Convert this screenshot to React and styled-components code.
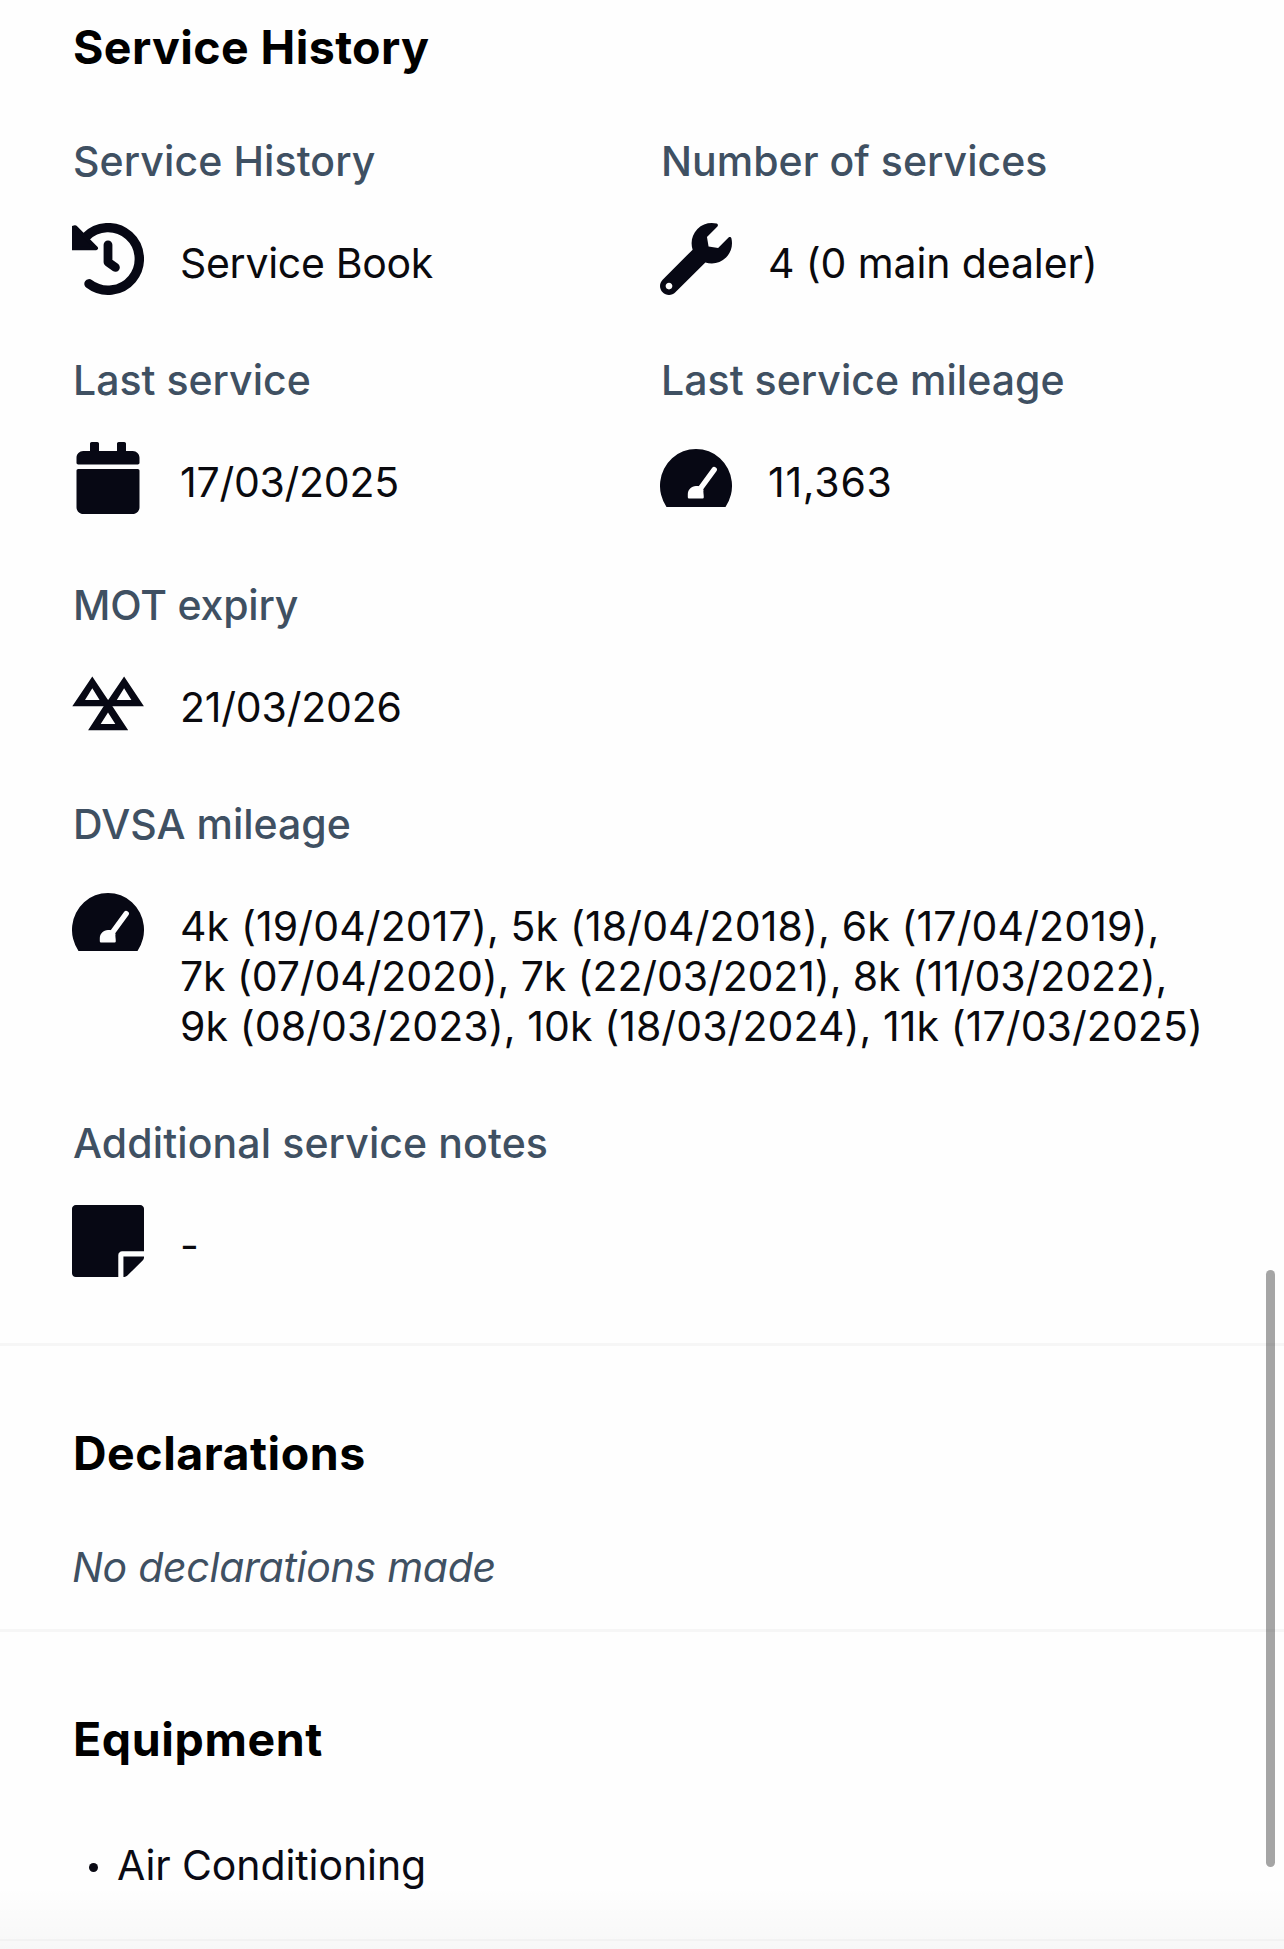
import React from 'react';
import styled, { createGlobalStyle } from 'styled-components';
import { FaWrench, FaCalendar } from 'react-icons/fa';

const GlobalStyle = createGlobalStyle`
    * {
        box-sizing: border-box;
    }

    body {
        margin: 0;
        background: #fefefe;
        font-family: Inter, 'Liberation Sans', sans-serif;
        overflow: hidden;
    }

    h2, p, ul, dl, dt, dd {
        margin: 0;
        padding: 0;
    }
`;

const PageStyles = styled.main`
    position: relative;
    height: 1949px;
    overflow: hidden;
    background: #fefefe;
`;

const Section = styled.section`
    height: ${({ $height }) => $height}px;
    padding: ${({ $top }) => $top}px 72px 0;
    border-bottom: ${({ $last }) => $last ? 'none' : '3px solid #f6f6f6'};
`;

const SectionTitle = styled.h2`
    height: 56px;
    padding-left: 1px;
    line-height: 56px;
    font-size: 46.5px;
    font-weight: 700;
    letter-spacing: ${({ $tracking }) => $tracking || 0}px;
    color: #000;
    white-space: nowrap;
`;

const DetailGrid = styled.dl`
    display: grid;
    grid-template-columns: 588px 1fr;
    grid-template-rows: 219px 225px 219px 319px 152px;
    margin-top: 61px;
`;

const Detail = styled.div`
    grid-column: ${({ $wide }) => $wide ? '1 / -1' : 'auto'};
`;

const DetailLabel = styled.dt`
    height: 50px;
    padding-left: 1px;
    line-height: 50px;
    font-size: 41px;
    font-weight: 500;
    letter-spacing: ${({ $tracking }) => $tracking || 0}px;
    color: #3f5062;
    white-space: nowrap;
`;

const DetailRow = styled.dd`
    display: flex;
    align-items: flex-start;
    gap: 36px;
    margin-top: 37px;
`;

const IconBox = styled.span`
    display: flex;
    flex: none;
    justify-content: center;
    width: 72px;
    height: 72px;
    font-size: 72px;
    color: #070814;
`;

const DetailValue = styled.span`
    padding-top: 15px;
    line-height: 50px;
    font-size: 41px;
    color: #0a0a0e;
    white-space: nowrap;
`;

const ValueLine = styled.span`
    display: block;
    letter-spacing: ${({ $tracking }) => $tracking || 0}px;
`;

const EmptyNote = styled.p`
    margin-top: 61px;
    line-height: 50px;
    font-size: 41px;
    font-style: italic;
    letter-spacing: -0.28px;
    color: #3f5062;
`;

const EquipmentList = styled.ul`
    margin-top: 73px;
    list-style: none;
`;

const EquipmentItem = styled.li`
    display: flex;
    align-items: center;
    gap: 19px;
    padding-left: 17px;
    line-height: 50px;
    font-size: 41px;
    letter-spacing: -0.1px;
    color: #0a0a14;

    &::before {
        content: '';
        width: 9px;
        height: 9px;
        margin-top: 4px;
        border-radius: 50%;
        background: #0a0a14;
    }
`;

const ScrollThumb = styled.div`
    position: absolute;
    top: 1270px;
    right: 9px;
    width: 9px;
    height: 597px;
    border-radius: 5px;
    background: rgba(0, 0, 0, 0.35);
`;

const BottomShade = styled.div`
    position: absolute;
    right: 0;
    bottom: 0;
    left: 0;
    height: 62px;
    background: linear-gradient(rgba(0, 0, 0, 0), rgba(0, 0, 0, 0.028));

    &::after {
        content: '';
        position: absolute;
        right: 0;
        bottom: 8px;
        left: 0;
        height: 2px;
        background: rgba(0, 0, 0, 0.025);
    }
`;


const HistoryIcon = () => (
    <svg width='72' height='72' viewBox='0 0 72 72' fill='none' stroke='currentColor' strokeLinecap='round' strokeLinejoin='round'>
        <path strokeWidth='9.4' d='M13.5 14.2A31.3 31.3 0 1 1 17 60.8' />
        <path strokeWidth='8.8' d='M36 21.8V39.2L43.4 44.4' />
        <path fill='currentColor' strokeWidth='4' d='M0 5L3.2 4.2L24 25.2H0Z' />
    </svg>
)

const GaugeIcon = () => (
    <svg width='72' height='72' viewBox='0 0 72 72'>
        <path fill='currentColor' d='M6.5 65A36 36.9 0 1 1 65.5 65Z' />
        <path fill='none' stroke='#fefefe' strokeWidth='5.4' strokeLinecap='round' d='M39.6 47.6L54.2 27.6' />
        <path fill='#fefefe' d='M27.8 55.2V52.5C27.8 47.6 31.4 44 36 44H38.5L43.6 47.8C43 49.5 43.8 52 43.8 55.2Q43.8 56.4 42.6 56.4H29Q27.8 56.4 27.8 55.2Z' />
    </svg>
)

const MotIcon = () => (
    <svg width='72' height='72' viewBox='0 0 72 72'>
        <g fill='currentColor' fillRule='evenodd'>
            <path d='M20.3 9.5L40.2 39.2H.3ZM20.3 21.2L13 32.9H27.6Z' />
            <path d='M52.1 9.5L71.9 39.2H32ZM52.1 21.2L44.8 32.9H59.4Z' />
            <path d='M36 32.5L56.2 63.2H16.1ZM36 45.4L28.7 57.1H43.3Z' />
        </g>
    </svg>
)

const NoteIcon = () => (
    <svg width='72' height='72' viewBox='0 32 448 448'>
        <path fill='currentColor' d='M312 320h136V56c0-13.3-10.7-24-24-24H24C10.7 32 0 42.7 0 56v400c0 13.3 10.7 24 24 24h264V344c0-13.2 10.8-24 24-24zm129 55l-98 98c-4.5 4.5-10.6 7-17 7h-6V352h128v6.1c0 6.3-2.5 12.4-7 16.9z' />
    </svg>
)

const service_details = [
    { label: 'Service History', label_tracking: 0.1, lines: [{ text: 'Service Book', tracking: -0.3 }], icon: <HistoryIcon /> },
    { label: 'Number of services', label_tracking: 0.03, lines: [{ text: '4 (0 main dealer)', tracking: -0.12 }], icon: <FaWrench /> },
    { label: 'Last service', lines: [{ text: '17/03/2025', tracking: -0.25 }], icon: <FaCalendar /> },
    { label: 'Last service mileage', label_tracking: 0.03, lines: [{ text: '11,363', tracking: 0.75 }], icon: <GaugeIcon /> },
    { label: 'MOT expiry', label_tracking: -0.2, lines: [{ text: '21/03/2026', tracking: -0.2 }], icon: <MotIcon />, wide: true },
    {
        label: 'DVSA mileage',
        lines: [
            { text: '4k (19/04/2017), 5k (18/04/2018), 6k (17/04/2019),', tracking: 0.12 },
            { text: '7k (07/04/2020), 7k (22/03/2021), 8k (11/03/2022),', tracking: -0.1 },
            { text: '9k (08/03/2023), 10k (18/03/2024), 11k (17/03/2025)', tracking: 0.08 },
        ],
        icon: <GaugeIcon />,
        wide: true
    },
    { label: 'Additional service notes', label_tracking: 0.11, lines: [{ text: '-' }], icon: <NoteIcon />, wide: true },
]

const App = () => {
    return (
        <PageStyles>
            <GlobalStyle />

            {/* SERVICE HISTORY */}
            <Section $height={1346} $top={19}>
                <SectionTitle $tracking={0.4}>Service History</SectionTitle>
                <DetailGrid>
                    {
                        service_details.map(detail => (
                            <Detail key={detail.label} $wide={detail.wide}>
                                <DetailLabel $tracking={detail.label_tracking}>{detail.label}</DetailLabel>
                                <DetailRow>
                                    <IconBox>{detail.icon}</IconBox>
                                    <DetailValue>
                                        {detail.lines.map(line => (
                                            <ValueLine key={line.text} $tracking={line.tracking}>{line.text}</ValueLine>
                                        ))}
                                    </DetailValue>
                                </DetailRow>
                            </Detail>
                        ))
                    }
                </DetailGrid>
            </Section>

            {/* DECLARATIONS */}
            <Section $height={286} $top={79}>
                <SectionTitle $tracking={0.5}>Declarations</SectionTitle>
                <EmptyNote>No declarations made</EmptyNote>
            </Section>

            {/* EQUIPMENT */}
            <Section $height={317} $top={79} $last>
                <SectionTitle $tracking={0.6}>Equipment</SectionTitle>
                <EquipmentList>
                    <EquipmentItem>Air Conditioning</EquipmentItem>
                </EquipmentList>
            </Section>

            <BottomShade />
            <ScrollThumb />
        </PageStyles>
    )
}

export default App;
